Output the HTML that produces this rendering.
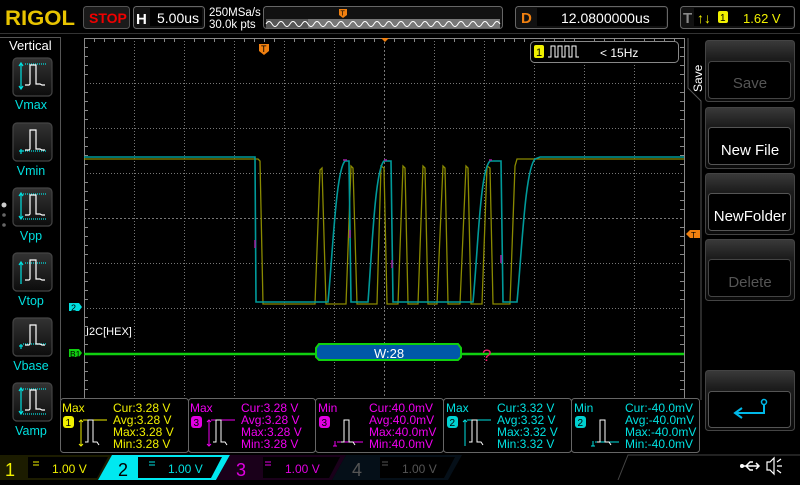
<!DOCTYPE html>
<html><head><meta charset="utf-8"><style>
html,body{margin:0;padding:0;background:#000;}
body{width:800px;height:480px;overflow:hidden;position:relative;font-family:"Liberation Sans",sans-serif;}
svg text{font-family:"Liberation Sans",sans-serif;}
</style></head><body>
<svg width="800" height="480" viewBox="0 0 800 480" xmlns="http://www.w3.org/2000/svg">
<defs>
<linearGradient id="btn" x1="0" y1="0" x2="0" y2="1"><stop offset="0" stop-color="#3a3a3a"/><stop offset="0.3" stop-color="#1c1c1c"/><stop offset="1" stop-color="#0a0a0a"/></linearGradient>
<linearGradient id="ibtn" x1="0" y1="0" x2="0" y2="1"><stop offset="0" stop-color="#333"/><stop offset="1" stop-color="#0c0c0c"/></linearGradient>
</defs>
<!-- top bar -->
<text x="5" y="25" font-family="Liberation Serif" font-weight="bold" font-size="21" fill="#e8c400" textLength="70" lengthAdjust="spacingAndGlyphs">RIGOL</text>
<rect x="83.5" y="6.5" width="46" height="22" rx="3" fill="#1a1a1a" stroke="#555"/>
<text x="89" y="23" font-size="14" font-weight="bold" fill="#f00000">STOP</text>
<rect x="133.5" y="6.5" width="71" height="22" rx="3" fill="#111" stroke="#666"/>
<rect x="150" y="8" width="52" height="18" fill="#000"/>
<text x="136" y="24" font-size="15" font-weight="bold" fill="#fff">H</text>
<text x="157" y="23" font-size="14" fill="#fff">5.00us</text>
<text x="209" y="16" font-size="11.5" fill="#fff">250MSa/s</text>
<text x="209" y="28" font-size="11.5" fill="#fff">30.0k pts</text>
<rect x="263.5" y="6.5" width="239" height="22" rx="3" fill="#111" stroke="#666"/>
<rect x="266" y="19" width="234" height="9" fill="#777"/>
<rect x="266" y="19" width="42" height="9" fill="#555"/>
<path d="M266 24 q3 -5 6 0 t6 0 t6 0 t6 0 t6 0 t6 0 t6 0 t6 0 t6 0 t6 0 t6 0 t6 0 t6 0 t6 0 t6 0 t6 0 t6 0 t6 0 t6 0 t6 0 t6 0 t6 0 t6 0 t6 0 t6 0 t6 0 t6 0 t6 0 t6 0 t6 0 t6 0 t6 0 t6 0 t6 0 t6 0 t6 0 t6 0 t6 0 t6 0" fill="none" stroke="#fff" stroke-width="1"/>
<path d="M339 9 h8 v6 l-4 3 l-4 -3z" fill="#f08010"/><text x="340.5" y="15.5" font-size="7" fill="#000">T</text>
<rect x="515.5" y="6.5" width="152" height="22" rx="3" fill="#111" stroke="#666"/>
<rect x="537" y="8" width="129" height="18" fill="#000"/>
<text x="521" y="23" font-size="15" font-weight="bold" fill="#f08010">D</text>
<text x="561" y="23" font-size="14" fill="#fff">12.0800000us</text>
<rect x="680.5" y="6.5" width="114" height="22" rx="3" fill="#111" stroke="#666"/>
<rect x="694" y="8" width="99" height="18" fill="#000"/>
<text x="683" y="23" font-size="15" font-weight="bold" fill="#888">T</text>
<text x="697" y="23" font-size="14" font-weight="bold" fill="#f0f000">↑↓</text>
<rect x="718" y="11" width="10" height="12" rx="2" fill="#f0f000"/><text x="720" y="21" font-size="10" fill="#000">1</text>
<text x="743" y="23" font-size="13" fill="#f0f000">1.62 V</text>
<line x1="0" y1="33.5" x2="800" y2="33.5" stroke="#333"/>
<!-- left panel -->
<path d="M0 37.5 H60.5 V400" fill="none" stroke="#555"/>
<text x="9" y="50" font-size="13" fill="#fff">Vertical</text>
<g fill="none" stroke-width="1.2">
<g transform="translate(13,58)"><rect x="0" y="0" width="39" height="38" rx="4" fill="url(#ibtn)" stroke="#444"/><path d="M8 5 V31 M6 8 l2-3 2 3 M6 28 l2 3 2-3" stroke="#00e0e0"/><path d="M12 6 H34" stroke="#00e0e0" stroke-dasharray="1,1"/><path d="M12 27 h4 l1 -1 v-19 h6 v19 h4 l2 1 h3" stroke="#fff"/></g>
<g transform="translate(13,123)"><rect x="0" y="0" width="39" height="38" rx="4" fill="url(#ibtn)" stroke="#444"/><path d="M8 26 V31 M6 28 h4" stroke="#00e0e0"/><path d="M10 28 H34" stroke="#00e0e0" stroke-dasharray="1,1"/><path d="M12 27 h4 l1 -1 v-19 h6 v19 h4 l2 1 h3" stroke="#fff"/></g>
<g transform="translate(13,188)"><rect x="0" y="0" width="39" height="38" rx="4" fill="url(#ibtn)" stroke="#444"/><path d="M8 6 V31 M6 8 l2-3 2 3 M6 28 l2 3 2-3" stroke="#00e0e0"/><path d="M10 6 H34 M10 31 H34" stroke="#00e0e0" stroke-dasharray="1,1"/><path d="M12 27 h4 l1 -1 v-19 h6 v19 h4 l2 1 h3" stroke="#fff"/></g>
<g transform="translate(13,253)"><rect x="0" y="0" width="39" height="38" rx="4" fill="url(#ibtn)" stroke="#444"/><path d="M8 10 V31 M6 12 l2-3 2 3" stroke="#00e0e0"/><path d="M12 10 H34" stroke="#00e0e0" stroke-dasharray="1,1"/><path d="M12 27 h4 l1 -1 v-19 h6 v19 h4 l2 1 h3" stroke="#fff"/></g>
<g transform="translate(13,318)"><rect x="0" y="0" width="39" height="38" rx="4" fill="url(#ibtn)" stroke="#444"/><path d="M8 26 V31 M6 28 h4" stroke="#00e0e0"/><path d="M10 26 H34" stroke="#00e0e0" stroke-dasharray="1,1"/><path d="M12 27 h4 l1 -1 v-19 h6 v19 h4 l2 1 h3" stroke="#fff"/></g>
<g transform="translate(13,383)"><rect x="0" y="0" width="39" height="38" rx="4" fill="url(#ibtn)" stroke="#444"/><path d="M8 6 V31 M6 8 l2-3 2 3 M6 28 l2 3 2-3" stroke="#00e0e0"/><path d="M10 6 H34 M10 31 H34" stroke="#00e0e0" stroke-dasharray="1,1"/><path d="M12 27 h4 l1 -1 v-19 h6 v19 h4 l2 1 h3" stroke="#fff"/></g>
</g>
<g font-size="12.5" fill="#00e0e0" text-anchor="middle">
<text x="31" y="109">Vmax</text><text x="31" y="175">Vmin</text><text x="31" y="240">Vpp</text><text x="31" y="305">Vtop</text><text x="31" y="370">Vbase</text><text x="31" y="435">Vamp</text>
</g>
<circle cx="4" cy="205" r="2.5" fill="#ccc"/><circle cx="4" cy="215" r="1.8" fill="#666"/><circle cx="4" cy="225" r="1.8" fill="#666"/>
<!-- grid -->
<g stroke="#777" stroke-width="1" stroke-dasharray="1,2">
<path d="M134.5 38V398 M184.5 38V398 M234.5 38V398 M284.5 38V398 M334.5 38V398 M434.5 38V398 M484.5 38V398 M534.5 38V398 M584.5 38V398 M634.5 38V398"/>
<path d="M84 83.5H684 M84 128.5H684 M84 173.5H684 M84 263.5H684 M84 308.5H684 M84 353.5H684"/>
<path d="M384.5 38V398 M84 218.5H684" stroke-dasharray="2,2"/>
</g>
<g stroke="#888">
<path d="M84.5 38V400 M684.5 38V400 M84 38.5H684"/>
<path id="tk" d="M84 47.5h4 M84 56.5h4 M84 65.5h4 M84 74.5h4 M84 92.5h4 M84 101.5h4 M84 110.5h4 M84 119.5h4 M84 137.5h4 M84 146.5h4 M84 155.5h4 M84 164.5h4 M84 182.5h4 M84 191.5h4 M84 200.5h4 M84 209.5h4 M84 227.5h4 M84 236.5h4 M84 245.5h4 M84 254.5h4 M84 272.5h4 M84 281.5h4 M84 290.5h4 M84 299.5h4 M84 317.5h4 M84 326.5h4 M84 335.5h4 M84 344.5h4 M84 362.5h4 M84 371.5h4 M84 380.5h4 M84 389.5h4"/>
<use href="#tk" transform="translate(596,0)"/>
<path d="M94.5 38v4 M104.5 38v4 M114.5 38v4 M124.5 38v4 M144.5 38v4 M154.5 38v4 M164.5 38v4 M174.5 38v4 M194.5 38v4 M204.5 38v4 M214.5 38v4 M224.5 38v4 M244.5 38v4 M254.5 38v4 M264.5 38v4 M274.5 38v4 M294.5 38v4 M304.5 38v4 M314.5 38v4 M324.5 38v4 M344.5 38v4 M354.5 38v4 M364.5 38v4 M374.5 38v4 M394.5 38v4 M404.5 38v4 M414.5 38v4 M424.5 38v4 M444.5 38v4 M454.5 38v4 M464.5 38v4 M474.5 38v4 M494.5 38v4 M504.5 38v4 M514.5 38v4 M524.5 38v4 M544.5 38v4 M554.5 38v4 M564.5 38v4 M574.5 38v4 M594.5 38v4 M604.5 38v4 M614.5 38v4 M624.5 38v4 M644.5 38v4 M654.5 38v4 M664.5 38v4 M674.5 38v4"/>
</g>
<path d="M84 400.5H684" stroke="#666"/>
<!-- trigger markers -->
<path d="M259 44 h10 v7 l-5 4 l-5 -4z" fill="#f08010"/><text x="261" y="52" font-size="9" fill="#000">T</text>
<path d="M381 38 h8 l-4 4z" fill="#f08010"/>
<path d="M700 230 h-10 l-4 4 4 4 h10z" fill="#f08010"/><text x="691" y="238" font-size="8" fill="#000">T</text>
<!-- traces -->
<path d="M84 159 H258 L260 161 L263 304 H315 L320 170 L322 168 L326 304 H346 L351 166 L353 168 L357 304 H377 L381 166 L384 168 L387 304 H398 L403 166 L405 168 L408 304 H418 L423 166 L425 168 L428 304 H437 L443 166 L445 168 L448 304 H460 L466 166 L468 168 L471 304 H482 L487 166 L490 168 L493 304 H510 L515 166 L517 159 H684" fill="none" stroke="#8a8a00" stroke-width="1.3"/>
<path d="M84 157 H255 L256 302 H328 C333 250 336 170 345 161 H349 L351 302 H368 C372 250 375 170 384 161 H391 L393 302 H473 C478 250 480 170 490 161 H501 L503 302 H517 C522 250 525 170 535 159 L540 157 H684" fill="none" stroke="#009a9a" stroke-width="1.6"/>
<path d="M255 240v8 M350 230v8 M392 260v8 M501 255v8 M343 160h4 M384 160h3 M489 160h3" stroke="#a020a0" stroke-width="1.5"/>
<!-- ch2 marker -->
<path d="M69 303 h10 l3 4 -3 4 h-10z" fill="#00e0e0"/><text x="71" y="311" font-size="9" fill="#000">2</text>
<text x="86" y="335" font-size="11" fill="#fff">I2C[HEX]</text>
<!-- bus -->
<path d="M84 354 H684" stroke="#10d010" stroke-width="2.5"/>
<path d="M69 349 h10 l3 4 -3 4 h-10z" fill="#10d010"/><text x="70" y="357" font-size="8.5" fill="#000">B1</text>
<path d="M319 344 H458 L461 348 V357 L458 360 H319 L316 357 V348Z" fill="#0058a8" stroke="#10d010" stroke-width="2"/>
<text x="389" y="358" font-size="13" fill="#fff" text-anchor="middle">W:28</text>
<text x="482" y="361" font-size="17" fill="#f0206a">?</text>
<!-- freq box -->
<rect x="530.5" y="41.5" width="148" height="21" rx="4" fill="#000" stroke="#888"/>
<rect x="534" y="45" width="10" height="13" rx="2" fill="#f0f000"/><text x="536" y="56" font-size="11" fill="#000">1</text>
<path d="M548 57 h3 v-11 h4 v11 h3 v-11 h4 v11 h3 v-11 h4 v11 h3 v-11 h4 v11 h3" fill="none" stroke="#fff"/>
<text x="600" y="57" font-size="12" fill="#fff">&lt; 15Hz</text>
<!-- right menu -->
<path d="M688 38 V88 L701 101 V400" fill="none" stroke="#555"/>
<text transform="translate(702,92) rotate(-90)" font-size="12" fill="#fff">Save</text>
<g>
<rect x="705.5" y="40.5" width="89" height="61" rx="3" fill="url(#btn)" stroke="#444"/>
<rect x="708.5" y="61.5" width="82" height="37" rx="3" fill="#000" stroke="#444"/>
<rect x="705.5" y="107.5" width="89" height="61" rx="3" fill="url(#btn)" stroke="#444"/>
<rect x="708.5" y="127.5" width="82" height="37" rx="3" fill="#000" stroke="#555"/>
<rect x="705.5" y="173.5" width="89" height="61" rx="3" fill="url(#btn)" stroke="#444"/>
<rect x="708.5" y="193.5" width="82" height="37" rx="3" fill="#000" stroke="#555"/>
<rect x="705.5" y="239.5" width="89" height="61" rx="3" fill="url(#btn)" stroke="#444"/>
<rect x="708.5" y="259.5" width="82" height="37" rx="3" fill="#000" stroke="#444"/>
<rect x="705.5" y="370.5" width="89" height="60" rx="3" fill="url(#btn)" stroke="#444"/>
<rect x="708.5" y="391.5" width="82" height="36" rx="3" fill="#000" stroke="#555"/>
</g>
<g font-size="15" text-anchor="middle">
<text x="750" y="88" fill="#555">Save</text>
<text x="750" y="155" fill="#fff">New File</text>
<text x="750" y="221" fill="#fff">NewFolder</text>
<text x="750" y="287" fill="#555">Delete</text>
</g>
<path d="M764 402 V413 H736 M742 408 l-7 5 7 5" fill="none" stroke="#00b8e8" stroke-width="2"/><circle cx="764" cy="402" r="2.5" fill="#000" stroke="#00b8e8" stroke-width="1.5"/>
<!-- measurement boxes -->
<g fill="#000" stroke="#666">
<rect x="60.5" y="398.5" width="128" height="54" rx="3"/>
<rect x="188.5" y="398.5" width="127" height="54" rx="3"/>
<rect x="315.5" y="398.5" width="128" height="54" rx="3"/>
<rect x="443.5" y="398.5" width="128" height="54" rx="3"/>
<rect x="571.5" y="398.5" width="128" height="54" rx="3"/>
</g>
<g font-size="12">
<g fill="#f0f000"><text x="62" y="412">Max</text><text x="113" y="412">Cur:3.28 V</text><text x="113" y="424">Avg:3.28 V</text><text x="113" y="436">Max:3.28 V</text><text x="113" y="448">Min:3.28 V</text></g>
<g fill="#f000f0"><text x="190" y="412">Max</text><text x="241" y="412">Cur:3.28 V</text><text x="241" y="424">Avg:3.28 V</text><text x="241" y="436">Max:3.28 V</text><text x="241" y="448">Min:3.28 V</text></g>
<g fill="#f000f0"><text x="318" y="412">Min</text><text x="369" y="412">Cur:40.0mV</text><text x="369" y="424">Avg:40.0mV</text><text x="369" y="436">Max:40.0mV</text><text x="369" y="448">Min:40.0mV</text></g>
<g fill="#00e0e0"><text x="446" y="412">Max</text><text x="497" y="412">Cur:3.32 V</text><text x="497" y="424">Avg:3.32 V</text><text x="497" y="436">Max:3.32 V</text><text x="497" y="448">Min:3.32 V</text></g>
<g fill="#00e0e0"><text x="574" y="412">Min</text><text x="625" y="412">Cur:-40.0mV</text><text x="625" y="424">Avg:-40.0mV</text><text x="625" y="436">Max:-40.0mV</text><text x="625" y="448">Min:-40.0mV</text></g>
</g>
<g font-size="10">
<rect x="63" y="416" width="11" height="12" rx="3" fill="#f0f000"/><text x="65.5" y="426" fill="#000">1</text>
<rect x="191" y="416" width="11" height="12" rx="3" fill="#e000e0"/><text x="193.5" y="426" fill="#000">3</text>
<rect x="319" y="416" width="11" height="12" rx="3" fill="#e000e0"/><text x="321.5" y="426" fill="#000">3</text>
<rect x="447" y="416" width="11" height="12" rx="3" fill="#00d0d0"/><text x="449.5" y="426" fill="#000">2</text>
<rect x="575" y="416" width="11" height="12" rx="3" fill="#00d0d0"/><text x="577.5" y="426" fill="#000">2</text>
</g>
<g fill="none" stroke-width="1">
<path d="M81 420 V446 M79 422 l2-2 2 2 M79 444 l2 2 2-2 M83 420 H107" stroke="#f0f000"/>
<path d="M85 442 h3 v-22 h5 v22 h4 l2 3" stroke="#fff"/>
<path d="M209 420 V446 M207 422 l2-2 2 2 M207 444 l2 2 2-2 M211 420 H235" stroke="#f000f0"/>
<path d="M213 442 h3 v-22 h5 v22 h4 l2 3" stroke="#fff"/>
<path d="M335 446 V441 M333 446 h4 M337 442 H363" stroke="#f000f0"/>
<path d="M341 442 h3 v-22 h5 v22 h4 l2 3" stroke="#fff"/>
<path d="M465 420 V446 M463 422 l2-2 2 2 M467 420 H491" stroke="#00e0e0"/>
<path d="M469 442 h3 v-22 h5 v22 h4 l2 3" stroke="#fff"/>
<path d="M593 446 V441 M591 446 h4 M595 442 H619" stroke="#00e0e0"/>
<path d="M597 442 h3 v-22 h5 v22 h4 l2 3" stroke="#fff"/>
</g>
<!-- bottom channel tabs -->
<path d="M0 455 H112 L98 480 H0Z" fill="#1c1c00"/>
<path d="M112 455 H230 L216 480 H98Z" fill="#00e8f0"/>
<path d="M230 455 H346 L332 480 H216Z" fill="#1a001a"/>
<path d="M346 455 H462 L448 480 H332Z" fill="#050f18"/>
<path d="M28 457 H108 L97 478 H28Z" fill="#000"/>
<path d="M138 457 H222 L211 478 H138Z" fill="#000"/>
<path d="M263 457 H340 L329 478 H263Z" fill="#000"/>
<path d="M380 457 H455 L444 478 H380Z" fill="#000"/>
<path d="M618 480 L628 455 H800" fill="none" stroke="#444"/>
<g font-size="18"><text x="5" y="476" fill="#f0f000">1</text><text x="118" y="476" fill="#000">2</text><text x="236" y="476" fill="#e000e0">3</text><text x="352" y="476" fill="#555">4</text></g>
<g font-size="12"><text x="52" y="473" fill="#f0f000">1.00 V</text><text x="168" y="473" fill="#00e0e0">1.00 V</text><text x="285" y="473" fill="#e000e0">1.00 V</text><text x="402" y="473" fill="#555">1.00 V</text></g>
<g stroke-width="1"><path d="M33 462h6 M33 465h6" stroke="#f0f000"/><path d="M149 462h6 M149 465h6" stroke="#00e0e0"/><path d="M265 462h6 M265 465h6" stroke="#e000e0"/><path d="M382 462h6 M382 465h6" stroke="#555"/></g>
<path d="M742 466 H759 M756 463 l3 3 -3 3 M746 466 l4 -4 h3 M746 466 l4 4 h3" fill="none" stroke="#fff" stroke-width="1.5"/><circle cx="742" cy="466" r="2" fill="#fff"/>
<path d="M767 462 h3 l4 -4 v16 l-4 -4 h-3z M777 462 l4 -3 M777 466 h5 M777 470 l4 3" fill="none" stroke="#fff" stroke-width="1.2"/>
</svg>
</body></html>
